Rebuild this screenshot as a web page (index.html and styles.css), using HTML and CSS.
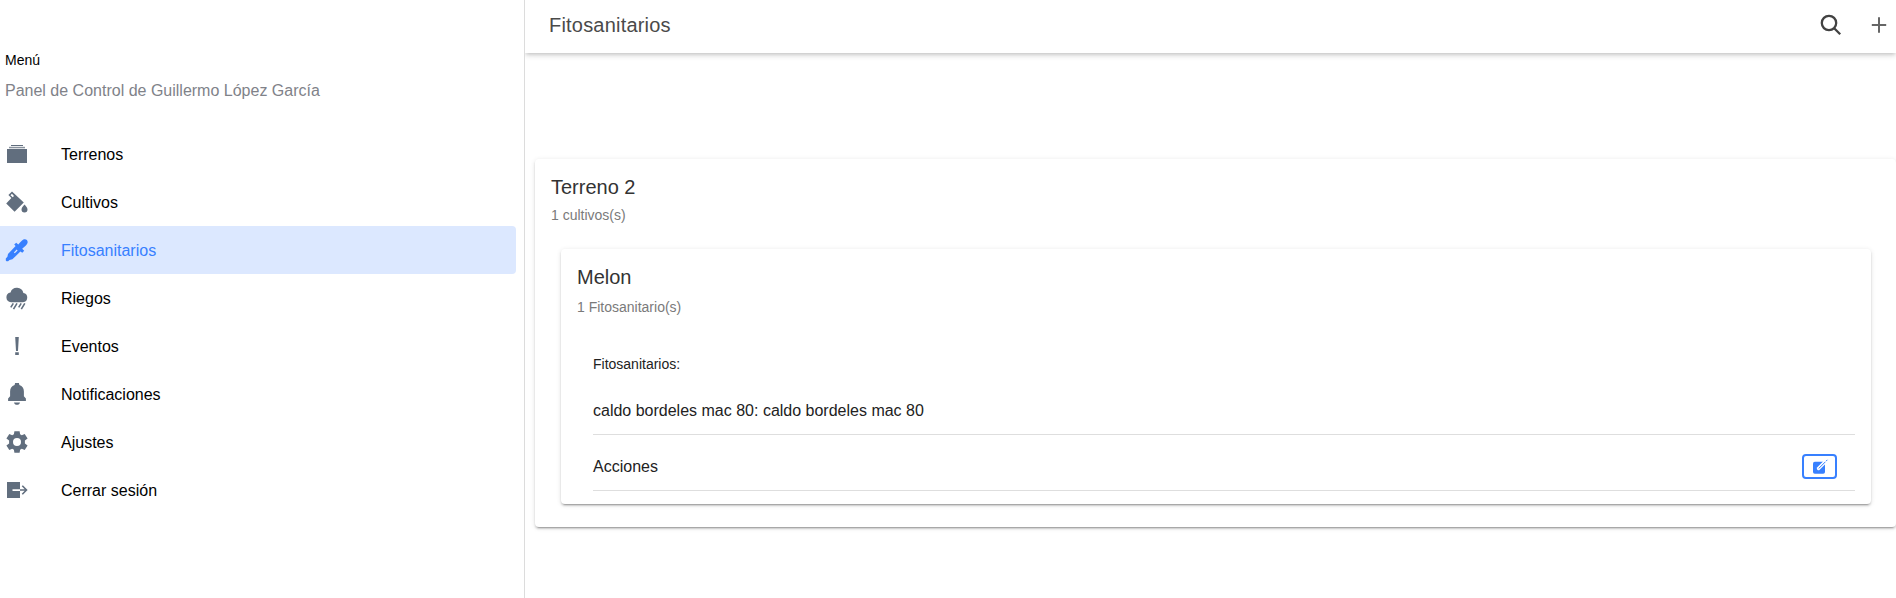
FILE: index.html
```html
<!DOCTYPE html>
<html lang="es">
<head>
<meta charset="utf-8">
<title>Fitosanitarios</title>
<link rel="stylesheet" href="styles.css">
</head>
<body>
<div class="app">
  <aside class="menu">
    <h1 class="menu-title">Menú</h1>
    <p class="menu-note">Panel de Control de Guillermo López García</p>
    <nav class="menu-list">
      <a class="menu-item"><svg class="icon" viewBox="0 0 24 24"><path d="M2 7h20v14H2z"/><path opacity=".75" d="M4 4.800h16v1.500H4z"/><path d="M6 3h12v1H6z"/></svg><span>Terrenos</span></a>
      <a class="menu-item"><svg class="icon" viewBox="0 0 24 24"><path fill-rule="evenodd" d="M7 1.500 18.800 12.600 9.600 21.800 1.200 13.400 6.400 8 3.400 5zM6.900 3.800 5.500 5.200l2.200 2.100 1.300-1.400z"/><path d="M19.500 14.600c1 1.100 3 3 3 4.900a3 3 0 0 1-6 0c0-1.900 2-3.800 3-4.900z"/></svg><span>Cultivos</span></a>
      <a class="menu-item selected"><svg class="icon" viewBox="0 0 24 24"><path fill-rule="evenodd" d="M9.200 6.600 11.200 4.700l2.100 1.900c1.800-1.800 3.100-4 5.100-5 1.200-.6 2.700-.4 3.500.4s1 2.300.4 3.500c-1 2-3.300 3.400-5.100 5.200l2 2.100-1.900 2-1.900-1.200-8 7.700-2.900.6-1.400 1.300H1.500L.8 22.500v-2l1.600-1.700.6-2.900 7.600-7.800zM11.700 11.600 8.900 14.400l.9.900 2.800-2.800z"/></svg><span>Fitosanitarios</span></a>
      <a class="menu-item"><svg class="icon" viewBox="0 0 24 24"><path d="M6 16.300a5 5 0 0 1-.5-9.900A6.700 6.700 0 0 1 18.400 7 4.700 4.700 0 0 1 18 16.300z"/><path class="line" d="m8.300 17.300-2.500 4M12 17.300l-3.500 5.900M16.200 17.300l-2.500 4M19.800 17.300l-3.500 5.900"/></svg><span>Riegos</span></a>
      <a class="menu-item"><svg class="icon" viewBox="0 0 24 24"><path d="M10.200 3h3.600l-.8 14h-2zM10.200 18.300h3.600V21h-3.600z"/></svg><span>Eventos</span></a>
      <a class="menu-item"><svg class="icon" viewBox="0 0 24 24"><path d="M20.900 16.500V19H3.100v-2.500l2-2.300V9.600c0-3.300 1.400-5.900 4.500-6.700l.5-1.800h3.800l.5 1.800c3.100.8 4.500 3.400 4.500 6.700v4.600zM9 20.500h6c-.3 1.500-1.500 2.300-3 2.300s-2.700-.8-3-2.300z"/></svg><span>Notificaciones</span></a>
      <a class="menu-item"><svg class="icon" viewBox="0 0 24 24"><path fill-rule="evenodd" d="m9.400 1.200-.5 3-1.700 1-2.900-1.100-2.900 4.400 2.700 1.900v3.200l-2.700 1.900 2.900 4.400 2.900-1.100 1.700 1 .5 3h5.200l.5-3 1.700-1 2.900 1.100 2.900-4.400-2.700-1.900v-3.200l2.700-1.900-2.900-4.400-2.900 1.100-1.700-1-.5-3zM12 8a4 4 0 1 1 0 8 4 4 0 0 1 0-8z"/></svg><span>Ajustes</span></a>
      <a class="menu-item"><svg class="icon" viewBox="0 0 24 24"><path d="M2 4h13v7.200H7.500v1.700H15V20H2z"/><path class="line" d="M15 12h6.500M17.300 7.800l4.200 4.200-4.200 4.200"/></svg><span>Cerrar sesión</span></a>
    </nav>
  </aside>
  <main class="page">
    <header class="toolbar">
      <h2 class="toolbar-title">Fitosanitarios</h2>
      <svg class="tool search" viewBox="0 0 24 24"><circle cx="10" cy="10" r="7.200"/><path d="m15.200 15.200 6 6"/></svg>
      <svg class="tool add" viewBox="0 0 24 24"><path d="M12 4.300v15.400M4.800 12h14.400"/></svg>
    </header>
    <section class="card outer">
      <h3 class="card-title">Terreno 2</h3>
      <p class="card-subtitle">1 cultivos(s)</p>
      <section class="card inner">
        <h3 class="card-title">Melon</h3>
        <p class="card-subtitle">1 Fitosanitario(s)</p>
        <div class="list">
          <div class="list-header">Fitosanitarios:</div>
          <div class="row first">caldo bordeles mac 80: caldo bordeles mac 80</div>
          <div class="row actions">Acciones
            <button class="edit" aria-label="Editar"><svg viewBox="0 0 16 16"><rect x="1" y="2.700" width="12" height="12" rx="1.800"/><path class="halo" d="m14 2-7.500 7.500"/><path class="pen" d="m15.400 .8-1.400 1.400M13.300 2.900 6.800 9.400"/></svg></button>
          </div>
        </div>
      </section>
    </section>
  </main>
</div>
</body>
</html>
```
FILE: styles.css
```css
* { box-sizing: border-box; }
body { margin: 0; background: #fff; color: #000; font: 16px/24px "Liberation Sans", Arial, sans-serif; }
h1, h2, h3, p { margin: 0; font-weight: 400; }
.app { display: flex; width: 100%; height: 598px; overflow: hidden; }
.menu { width: 525px; flex: none; border-right: 1px solid #dcdcdc; padding-top: 50px; }
.menu-title { padding-left: 5px; font-size: 14px; line-height: 20px; }
.menu-note { padding: 9px 0 0 5px; color: #808289; }
.menu-list { margin-top: 27px; padding-right: 8px; }
.menu-item { display: flex; align-items: center; gap: 32px; height: 48px; padding-left: 5px; border-radius: 0 4px 4px 0; }
.menu-item span { padding-top: 2px; }
.menu-item.selected { background: #dce8ff; color: #3880ff; }
.icon { width: 24px; height: 24px; fill: #616e7e; }
.selected .icon { fill: #3880ff; }
.icon .line { fill: none; stroke: #616e7e; stroke-width: 1.600; }
.page { flex: 1; min-width: 0; background: #fff; overflow: hidden; }
.toolbar { display: flex; align-items: center; height: 53px; padding: 0 5px 3px 24px; box-shadow: 0 2px 4px -1px rgba(0,0,0,.2), 0 4px 5px 0 rgba(0,0,0,.06), 0 1px 10px 0 rgba(0,0,0,.03); }
.toolbar-title { flex: 1; font-size: 20px; letter-spacing: .2px; color: #4a4a4a; }
.tool { width: 24px; height: 24px; fill: none; stroke: #424242; }
.search { margin-right: 24px; stroke-width: 2.300; }
.add { stroke-width: 2; stroke: #666; }
.card { border-radius: 4px; background: #fff; box-shadow: 0 3px 1px -2px rgba(0,0,0,.2), 0 2px 2px 0 rgba(0,0,0,.14), 0 1px 5px 0 rgba(0,0,0,.12); }
.card-title { font-size: 20px; color: #333; }
.card-subtitle { font-size: 14px; line-height: 20px; color: #7a7a7a; }
.outer { height: 368px; margin: 106px 0 0 10px; padding: 16px 25px 0 16px; }
.outer > .card-subtitle { padding-top: 6px; }
.inner { height: 255px; margin: 24px 0 0 10px; padding: 16px 16px 0; }
.inner > .card-subtitle { padding-top: 8px; }
.list { padding: 37px 0 0 16px; color: #222; }
.list-header { font-size: 14px; line-height: 20px; }
.row { display: flex; align-items: center; justify-content: space-between; border-bottom: 1px solid #dedede; }
.first { height: 61px; padding-top: 13px; }
.actions { height: 56px; padding: 8px 18px 0 0; }
.edit { display: flex; align-items: center; justify-content: center; width: 35px; height: 25px; padding: 0; border: 2px solid #3880ff; border-radius: 4px; background: none; }
.edit svg { width: 16px; height: 16px; fill: #3880ff; overflow: visible; }
.edit .halo { stroke: #fff; stroke-width: 3.300; stroke-linecap: round; }
.edit .pen { stroke: #3880ff; stroke-width: 1; }
```
